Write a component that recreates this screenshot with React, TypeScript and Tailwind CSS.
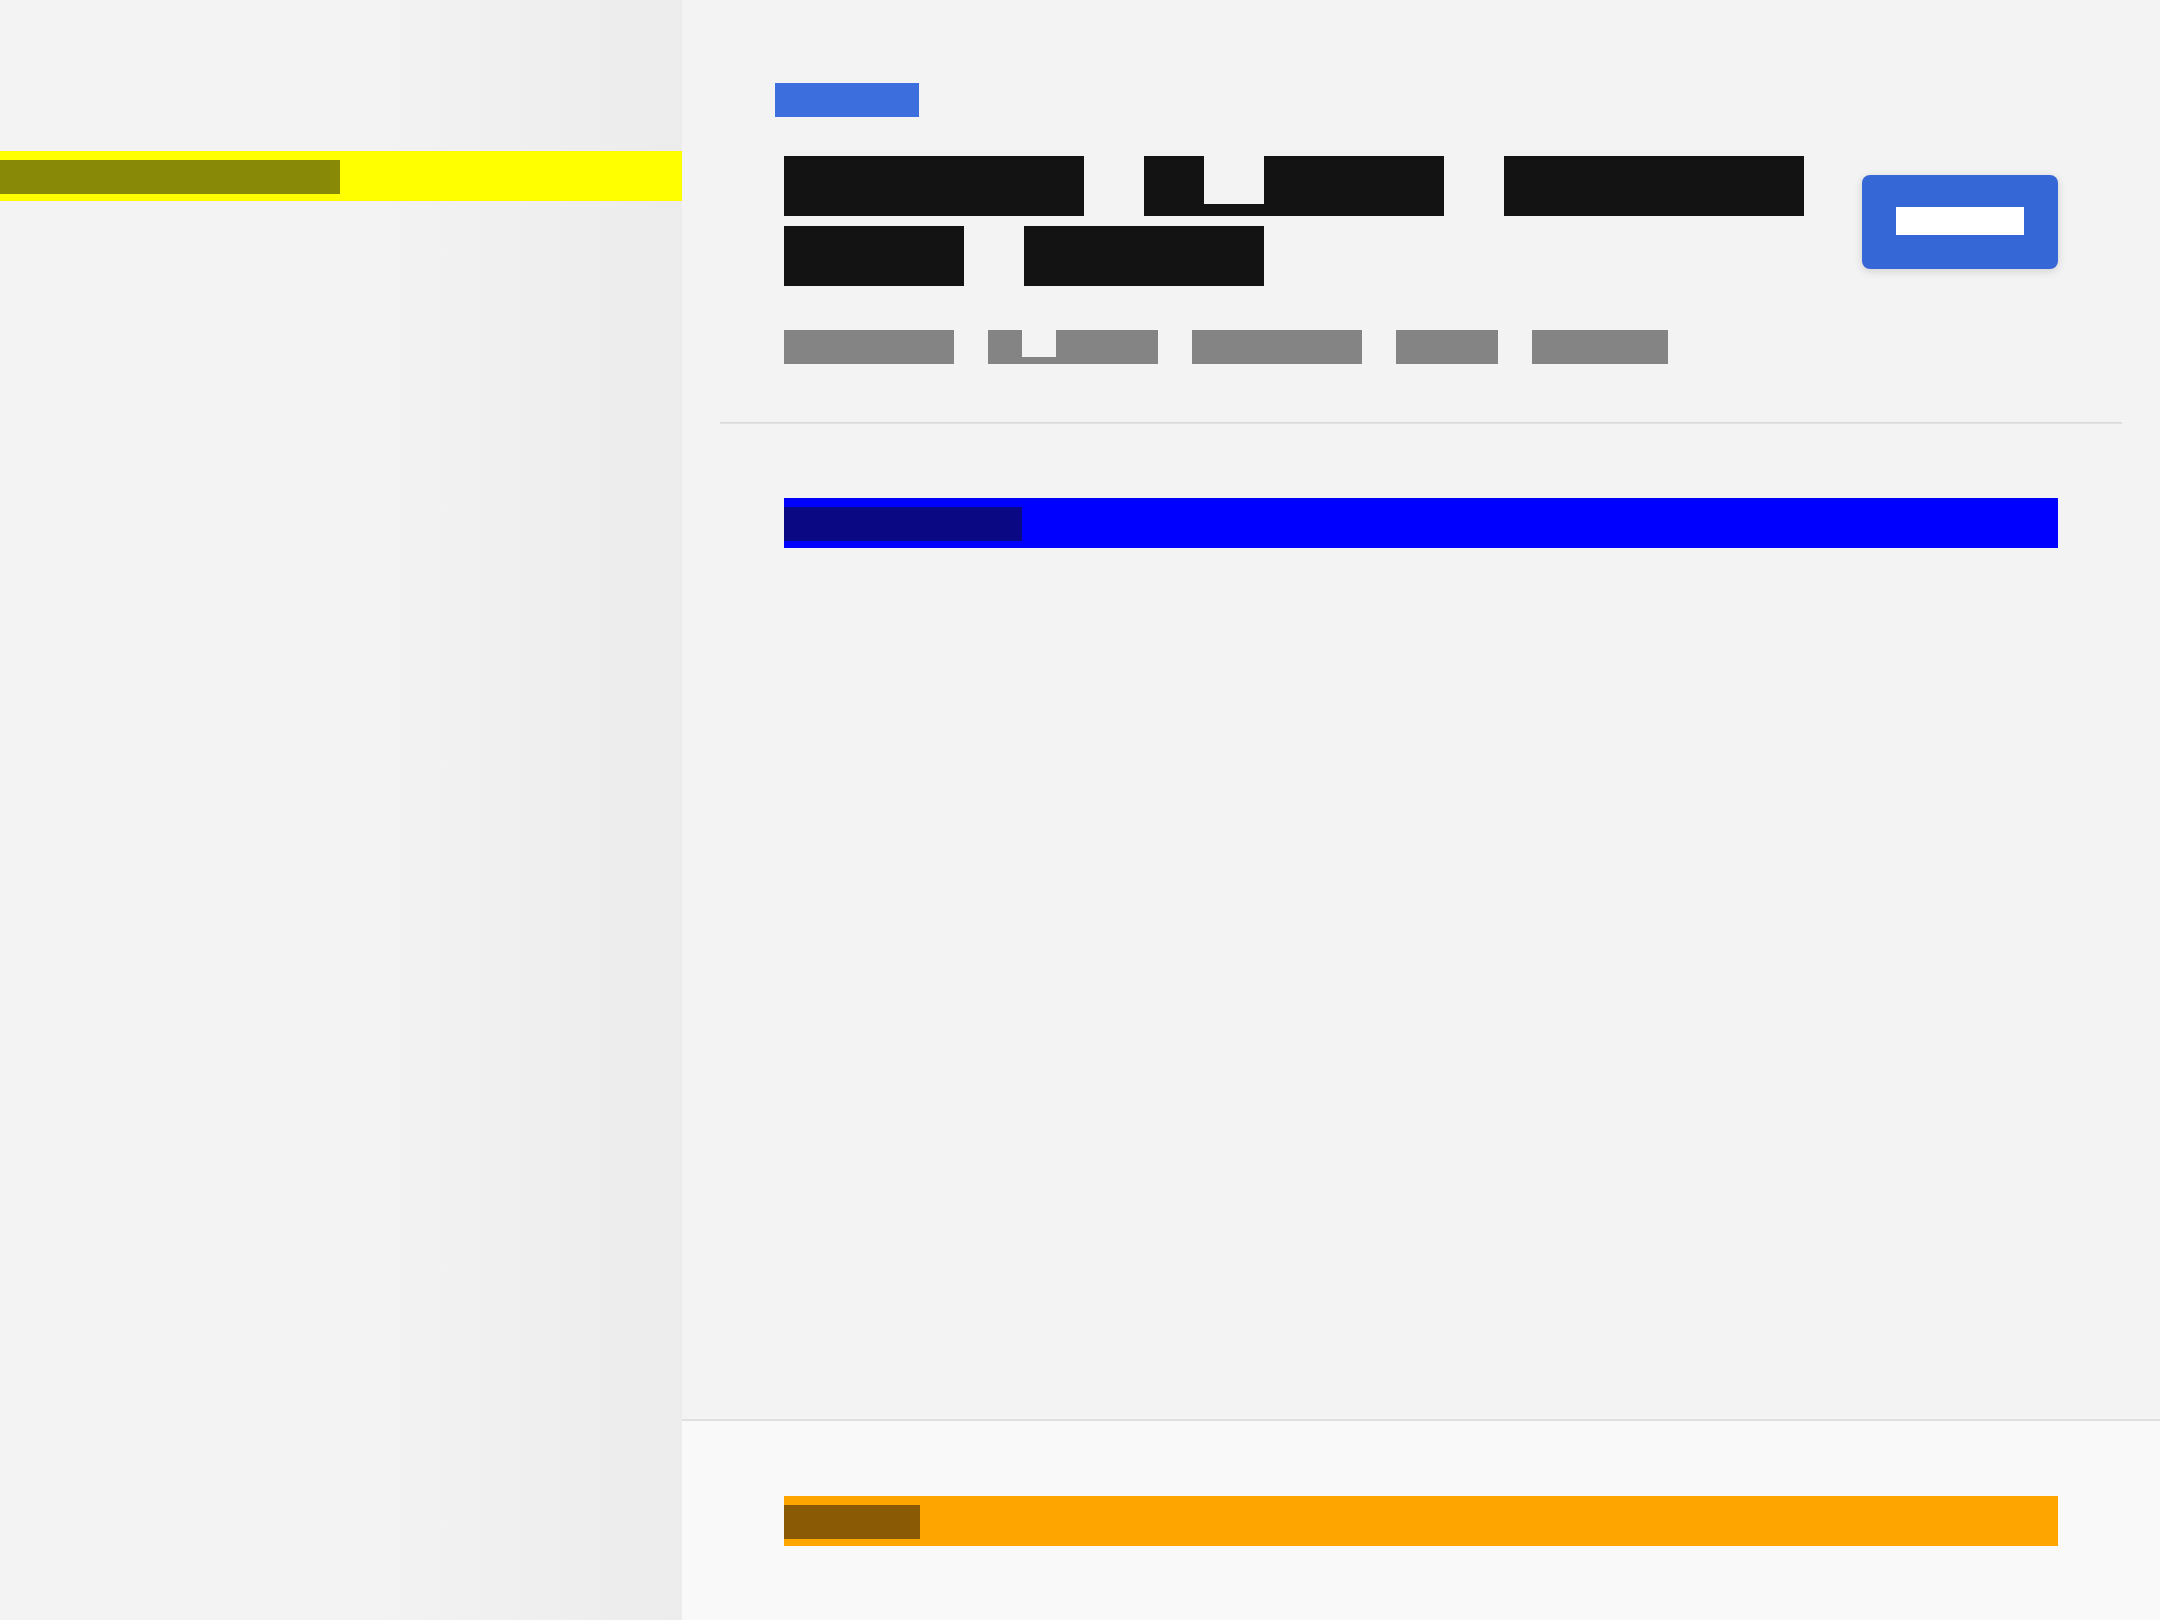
import React from "react";

function Word({ w, notch }: { w: number; notch?: [number, number] }) {
  return (
    <div className="relative h-[60px] bg-[#131313]" style={{ width: w }}>
      {notch && (
        <div
          className="absolute top-0 h-[48px] bg-[#f3f3f3]"
          style={{ left: notch[0], width: notch[1] }}
        />
      )}
    </div>
  );
}

function Meta({ w, notch }: { w: number; notch?: [number, number] }) {
  return (
    <div className="relative h-[34px] bg-[#848484]" style={{ width: w }}>
      {notch && (
        <div
          className="absolute top-0 h-[27px] bg-[#f3f3f3]"
          style={{ left: notch[0], width: notch[1] }}
        />
      )}
    </div>
  );
}

export default function App() {
  return (
    <div className="flex h-[1620px] w-[2160px] overflow-hidden bg-[#f3f3f3] font-['Liberation_Sans',sans-serif]">
      <aside className="flex w-[682px] shrink-0 flex-col bg-linear-to-r from-[#f3f3f3] from-[54%] to-[#ececec] pt-[151px]">
        <div className="flex h-[50px] items-start bg-[#ffff00] pt-[9px]">
          <div className="h-[34px] w-[340px] bg-[#898908]" />
        </div>
      </aside>
      <main className="flex min-w-0 flex-1 flex-col">
        <div className="flex-1">
          <header className="px-[102px] pt-[83px]">
            <div className="-ml-[9px] h-[34px] w-[144px] bg-[#3c6fdd]" />
            <div className="mt-[39px] flex items-center gap-[58px]">
              <div className="flex w-[1020px] flex-col gap-[10px]">
                <div className="flex gap-[60px]">
                  <Word w={300} />
                  <Word w={300} notch={[60, 60]} />
                  <Word w={300} />
                </div>
                <div className="flex gap-[60px]">
                  <Word w={180} />
                  <Word w={240} />
                </div>
              </div>
              <button className="mt-[2px] flex h-[94px] w-[196px] items-center justify-center rounded-lg bg-[#3667d6] pb-[2px] shadow-[0_2px_8px_rgba(0,0,0,0.15)]">
                <span className="block h-[28px] w-[128px] bg-white" />
              </button>
            </div>
            <div className="mt-[44px] flex gap-[34px]">
              <Meta w={170} />
              <Meta w={170} notch={[34, 34]} />
              <Meta w={170} />
              <Meta w={102} />
              <Meta w={136} />
            </div>
          </header>
          <div className="mx-[38px] mt-[58px] h-[2px] border-t border-b border-t-[#d9d9d9] border-b-[#e2e2e2]" />
          <section className="px-[102px] pt-[74px]">
            <div className="flex h-[50px] items-start bg-[#0000ff] pt-[9px]">
              <div className="h-[34px] w-[238px] bg-[#0a0882]" />
            </div>
          </section>
        </div>
        <footer className="h-[201px] border-t-2 border-[#e0e0e0] bg-[#f9f9f9] px-[102px] pt-[75px]">
          <div className="flex h-[50px] items-start bg-[#ffa500] pt-[9px]">
            <div className="h-[34px] w-[136px] bg-[#8a5a04]" />
          </div>
        </footer>
      </main>
    </div>
  );
}
